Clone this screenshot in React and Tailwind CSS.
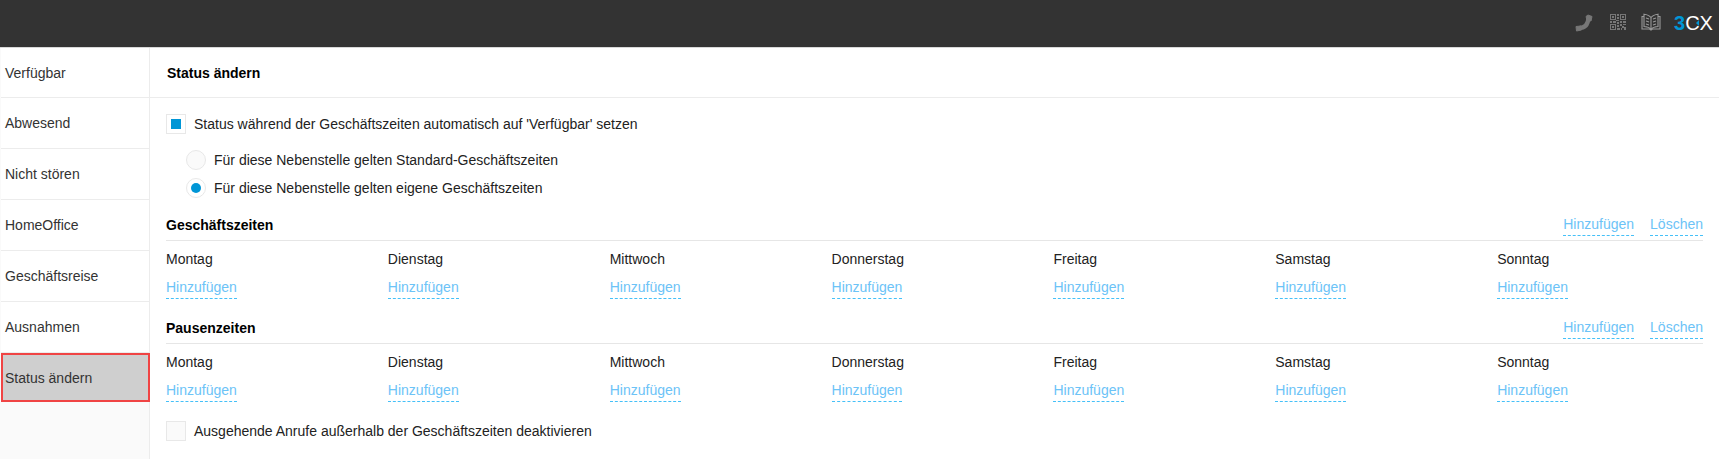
import React from "react";

const days = ["Montag", "Dienstag", "Mittwoch", "Donnerstag", "Freitag", "Samstag", "Sonntag"];
const nav = ["Abwesend", "Nicht stören", "HomeOffice", "Geschäftsreise", "Ausnahmen"];

function DashLink({ children }) {
  return (
    <a className="inline-block h-[21px] leading-[19px] border-b border-dashed border-[#45c0f8] text-[#6cc3f7] text-sm">
      {children}
    </a>
  );
}

function Section({ title, className }) {
  return (
    <section className={className}>
      <div className="w-[1537px] flex items-start justify-between border-b border-[#e6e6e6] h-[25px]">
        <h3 className="font-bold text-[14px] leading-[16px] mt-[1px] text-black">{title}</h3>
        <div className="flex gap-[16px] -mt-[1px]">
          <DashLink>Hinzufügen</DashLink>
          <DashLink>Löschen</DashLink>
        </div>
      </div>
      <div className="grid grid-cols-7 w-[1553px] pt-[10px]">
        {days.map((d) => (
          <div key={d} className="flex flex-col items-start">
            <span className="text-sm leading-[16px] text-[#222]">{d}</span>
            <div className="mt-[10px]">
              <DashLink>Hinzufügen</DashLink>
            </div>
          </div>
        ))}
      </div>
    </section>
  );
}

function PhoneIcon() {
  return (
    <svg viewBox="0 0 18 18" className="w-[18px] h-[18px]" fill="none" stroke="#777">
      <path d="M4 14C9.500 14 13 10.500 13.500 4" strokeWidth="4.2" />
      <path d="M1 12.500L1.500 17L6.500 16L6 12Z" fill="#777" strokeWidth="1" strokeLinejoin="round" />
      <path d="M11 2.500L13 1L17 2.500L16 7L12 6Z" fill="#777" strokeWidth="1" strokeLinejoin="round" />
    </svg>
  );
}

function QrIcon() {
  const d =
    "M0 0h6v6H0zM1 1v4h4V1zM2 2h2v2H2z" +
    "M10 0h6v6h-6zM11 1v4h4V1zM12 2h2v2h-2z" +
    "M0 10h6v6H0zM1 11v4h4v-4zM2 12h2v2H2z" +
    "M7 0h2v2H7zM7 3h2v2H7zM6 6h3v1H6zM0 7h2v2H0zM3 7h3v2H3zM7 8h2v2H7z" +
    "M10 7h2v2h-2zM13 7h3v2h-3zM10 10h2v2h-2zM13 10h3v1h-3zM7 11h2v2H7zM12 12h2v2h-2zM7 14h3v2H7zM11 14h1v2h-1zM14 13h2v3h-2z";
  return (
    <svg viewBox="0 0 16 16" className="w-[16px] h-[16px]" fill="#777" fillRule="evenodd">
      <path d={d} />
    </svg>
  );
}

function BookIcon() {
  return (
    <svg viewBox="0 0 20 18" className="w-[20px] h-[18px]" fill="none" stroke="#999" strokeWidth="1.1">
      <path d="M10 4.500C8.500 2.500 6 1.500 3 1.200V13.500C6 13.800 8.500 14.600 10 16.200C11.500 14.600 14 13.800 17 13.500V1.200C14 1.500 11.500 2.500 10 4.500Z" />
      <path d="M10 4.500V16.200" />
      <path d="M3 3.500H1V16H8.500L10 17L11.500 16H19V3.500H17" />
      <path d="M5 5L8 6M5 8L8 9M5 11L8 12M15 5L12 6M15 8L12 9M15 11L12 12" />
    </svg>
  );
}

function NavRow({ children, className }) {
  return (
    <div className={`shrink-0 bg-white border-b border-[#ececec] flex items-center pl-[4px] text-[#333] text-sm ${className}`}>
      {children}
    </div>
  );
}

export default function App() {
  return (
    <div className="w-[1719px] h-[459px] overflow-hidden bg-white text-sm font-['Liberation_Sans',Arial,sans-serif]">
      <header className="h-[48px] bg-[#333333] flex items-start justify-end pt-[13px] pr-[6px] border-b border-[#d8d8d8]">
        <div className="mt-[1px] mr-[17px]"><PhoneIcon /></div>
        <div className="mt-[1px] mr-[15px]"><QrIcon /></div>
        <div className="mr-[13px]"><BookIcon /></div>
        <div className="relative flex w-[39px] text-[20px] leading-[20px] h-[20px] text-white">
          <span className="font-bold text-[#0096d6]">3</span>
          <span>C</span>
          <span>X</span>
          <svg viewBox="0 0 3 6" className="absolute left-[22px] top-[7px] w-[3px] h-[6px]" fill="#0096d6">
            <path d="M0 3L3 0V6Z" />
          </svg>
        </div>
      </header>
      <div className="flex h-[411px]">
        <aside className="w-[150px] shrink-0 h-full pl-[1px] bg-[#fafafa] border-r border-[#ececec] flex flex-col">
          <NavRow className="h-[50px]">Verfügbar</NavRow>
          {nav.map((n) => (
            <NavRow key={n} className="h-[51px]">{n}</NavRow>
          ))}
          <div className="h-[49px] -mr-[1px] shrink-0 bg-[#cfcfcf] border-2 border-[#f04444] flex items-center pl-[2px] text-[#333] text-sm">
            Status ändern
          </div>
        </aside>
        <main className="flex-1 min-w-0">
          <div className="h-[50px] border-b border-[#ececec] flex items-center pl-[17px]">
            <h2 className="font-bold text-[14px] text-black">Status ändern</h2>
          </div>
          <div className="pl-[16px]">
            <label className="flex items-center gap-[8px] mt-[16px] h-[20px]">
              <span className="w-[20px] h-[20px] border border-[#e8e8e8] flex items-center justify-center">
                <span className="w-[10px] h-[10px] bg-[#0096d6]" />
              </span>
              <span className="text-[#222]">Status während der Geschäftszeiten automatisch auf 'Verfügbar' setzen</span>
            </label>
            <label className="flex items-center gap-[8px] ml-[20px] mt-[16px] h-[20px]">
              <span className="w-[20px] h-[20px] rounded-full border border-[#e8e8e8] bg-[#fafafa]" />
              <span className="text-[#222]">Für diese Nebenstelle gelten Standard-Geschäftszeiten</span>
            </label>
            <label className="flex items-center gap-[8px] ml-[20px] mt-[8px] h-[20px]">
              <span className="w-[20px] h-[20px] rounded-full border border-[#e8e8e8] flex items-center justify-center">
                <span className="w-[10px] h-[10px] rounded-full bg-[#0096d6]" />
              </span>
              <span className="text-[#222]">Für diese Nebenstelle gelten eigene Geschäftszeiten</span>
            </label>
            <Section title="Geschäftszeiten" className="mt-[18px]" />
            <Section title="Pausenzeiten" className="mt-[20px]" />
            <label className="flex items-center gap-[8px] mt-[19px] h-[20px]">
              <span className="w-[20px] h-[20px] border border-[#e8e8e8] bg-[#fafafa]" />
              <span className="text-[#222]">Ausgehende Anrufe außerhalb der Geschäftszeiten deaktivieren</span>
            </label>
          </div>
        </main>
      </div>
    </div>
  );
}
